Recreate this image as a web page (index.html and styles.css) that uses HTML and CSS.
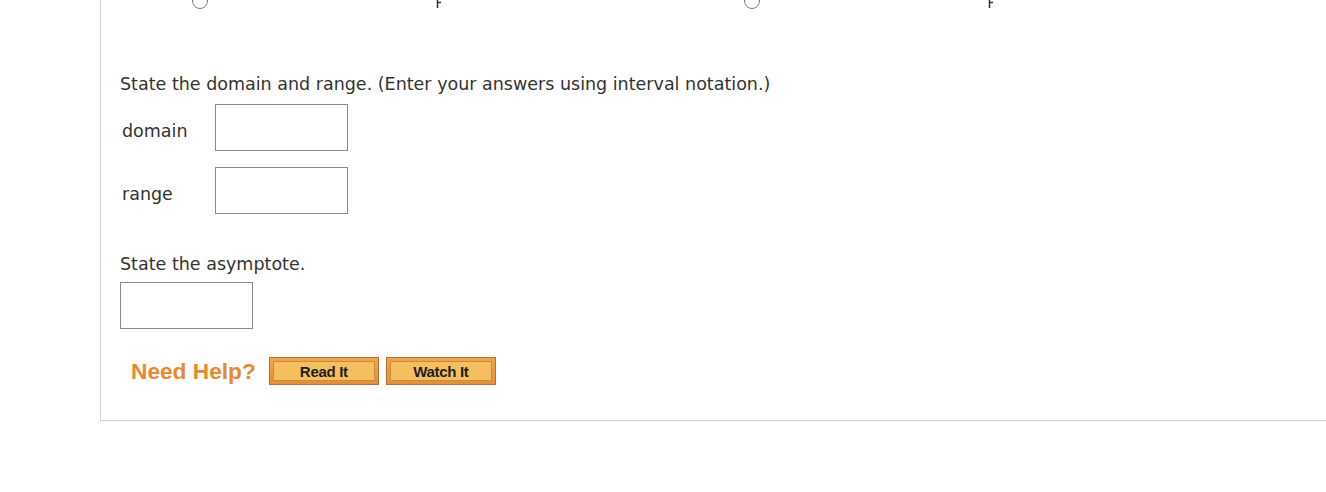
FILE: index.html
```html
<!DOCTYPE html>
<html>
<head>
<meta charset="utf-8">
<link rel="stylesheet" href="styles.css">
</head>
<body>
<div class="panel">
  <div class="graphs">
    <div class="graph-choice">
      <span class="radio"></span>
      <svg class="tick" width="8" height="10" viewBox="0 0 8 10"><path d="M1.5 0V9M1.5 3.5H5" stroke="#333" stroke-width="1.5" fill="none"/></svg>
    </div>
    <div class="graph-choice">
      <span class="radio"></span>
      <svg class="tick" width="8" height="10" viewBox="0 0 8 10"><path d="M1.5 0V9M1.5 3.5H5" stroke="#333" stroke-width="1.5" fill="none"/></svg>
    </div>
  </div>

  <p class="prompt first">State the domain and range. (Enter your answers using interval notation.)</p>
  <div class="field-row">
    <label class="field-label">domain</label>
    <input class="answer" type="text">
  </div>
  <div class="field-row">
    <label class="field-label">range</label>
    <input class="answer" type="text">
  </div>

  <p class="prompt second">State the asymptote.</p>
  <input class="answer solo" type="text">

  <div class="help">
    <span class="need-help">Need Help?</span>
    <button class="help-btn"><span>Read It</span></button>
    <button class="help-btn"><span>Watch It</span></button>
  </div>
</div>
</body>
</html>
```

FILE: styles.css
```css
html, body {
  margin: 0;
  padding: 0;
  background: #fff;
}
body {
  font-family: "DejaVu Sans", Verdana, sans-serif;
  color: #333;
  overflow: hidden;
}
.panel {
  margin-left: 100px;
  height: 421px;
  border-left: 1px solid #cfcfcf;
  border-bottom: 1px solid #cfcfcf;
  padding-left: 19px;
  box-sizing: border-box;
}
.graphs {
  display: flex;
  height: 10px;
  overflow: hidden;
}
.graph-choice {
  width: 552px;
  display: flex;
  height: 10px;
}
.radio {
  display: block;
  width: 14px;
  height: 14px;
  border: 1px solid #777;
  border-radius: 50%;
  margin-left: 72px;
  margin-top: -7px;
  background: #fff;
}
.tick {
  display: block;
  margin-left: 228px;
  margin-top: -1px;
}
.prompt {
  margin: 0;
  font-size: 17.5px;
  line-height: 20px;
}
.prompt.first {
  margin-top: 64px;
  margin-bottom: 10px;
}
.field-row {
  display: flex;
  align-items: center;
  margin-bottom: 16px;
}
.field-label {
  width: 93px;
  padding-left: 2px;
  padding-top: 6px;
  font-size: 17.5px;
}
.answer {
  display: block;
  width: 133px;
  height: 47px;
  box-sizing: border-box;
  border: 1px solid #8a8a8a;
  margin: 0;
  padding: 0;
  background: #fff;
}
.prompt.second {
  margin-top: 40px;
  margin-bottom: 8px;
}
.help {
  display: flex;
  align-items: center;
  margin-top: 28px;
  padding-left: 11px;
}
.need-help {
  font-family: "Liberation Sans", Arial, sans-serif;
  font-weight: bold;
  font-size: 22.7px;
  color: #e58a2f;
  margin-right: 13px;
}
.help-btn {
  width: 110px;
  height: 28px;
  padding: 3px;
  margin: 0 7px 0 0;
  border: 1px solid #b86f30;
  background: linear-gradient(#f0a64c, #e48f36);
  box-sizing: border-box;
  cursor: pointer;
}
.help-btn span {
  display: flex;
  align-items: center;
  justify-content: center;
  height: 100%;
  box-sizing: border-box;
  border: 1px solid #c98a45;
  background: #f5be5e;
  font-family: "Liberation Sans", Arial, sans-serif;
  font-weight: bold;
  font-size: 15px;
  letter-spacing: -0.3px;
  color: #1e1e1e;
}
```
